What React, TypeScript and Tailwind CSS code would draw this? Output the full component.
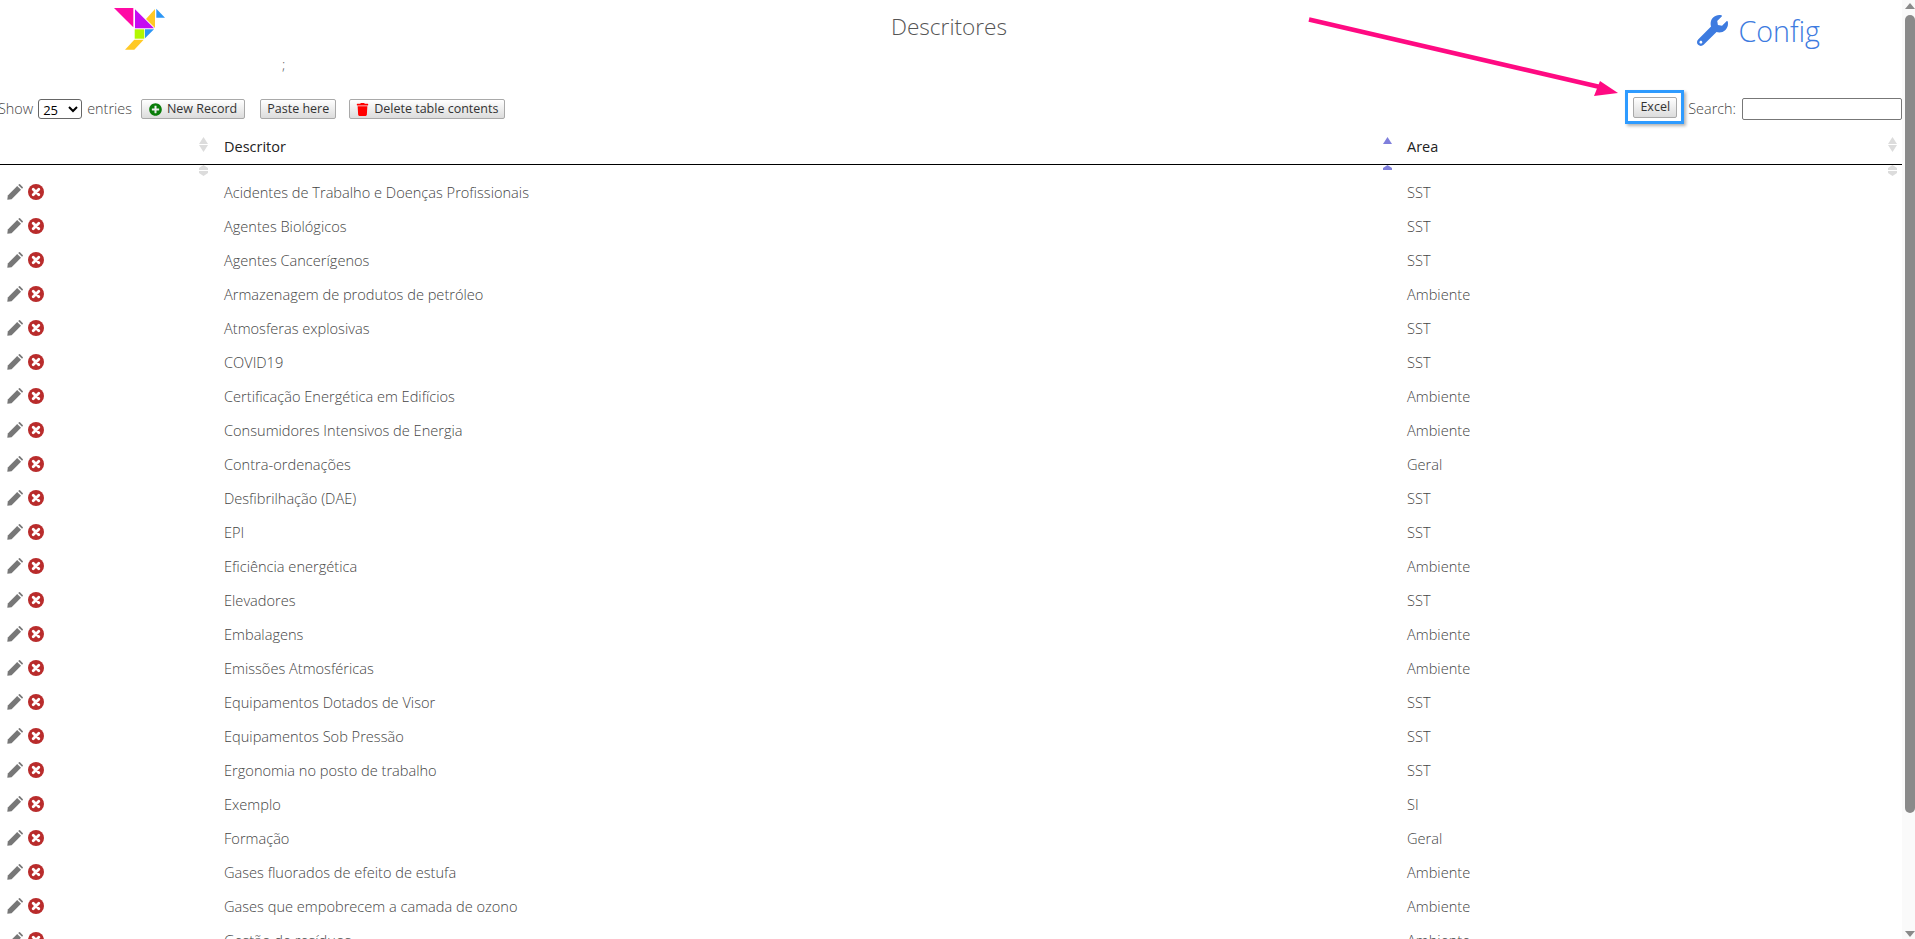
import { FaPlusCircle, FaTrash, FaWrench } from "react-icons/fa";

const rows: [string, string][] = [
  ["Acidentes de Trabalho e Doenças Profissionais", "SST"],
  ["Agentes Biológicos", "SST"],
  ["Agentes Cancerígenos", "SST"],
  ["Armazenagem de produtos de petróleo", "Ambiente"],
  ["Atmosferas explosivas", "SST"],
  ["COVID19", "SST"],
  ["Certificação Energética em Edifícios", "Ambiente"],
  ["Consumidores Intensivos de Energia", "Ambiente"],
  ["Contra-ordenações", "Geral"],
  ["Desfibrilhação (DAE)", "SST"],
  ["EPI", "SST"],
  ["Eficiência energética", "Ambiente"],
  ["Elevadores", "SST"],
  ["Embalagens", "Ambiente"],
  ["Emissões Atmosféricas", "Ambiente"],
  ["Equipamentos Dotados de Visor", "SST"],
  ["Equipamentos Sob Pressão", "SST"],
  ["Ergonomia no posto de trabalho", "SST"],
  ["Exemplo", "SI"],
  ["Formação", "Geral"],
  ["Gases fluorados de efeito de estufa", "Ambiente"],
  ["Gases que empobrecem a camada de ozono", "Ambiente"],
  ["Gestão de resíduos", "Ambiente"],
];

const btn =
  "h-[20px] px-[6px] flex items-center gap-[5px] rounded-[2px] border border-[#a9a9a9] bg-gradient-to-b from-white to-[#dcdcdc] text-[12.5px] font-normal text-[#333]";

function Logo() {
  return (
    <svg width="56" height="46" viewBox="112 6 56 46" className="block">
      <polygon points="114,8 133.3,8 133.3,27.3" fill="#ff0aa5" />
      <polygon points="135,9.3 154,28.3 135,28.3" fill="#c50cf2" />
      <polygon points="155,9 155,28 146,19" fill="#ffc926" />
      <polygon points="156.3,8.7 165,17.7 156.3,17.7" fill="#2b96f5" />
      <rect x="134.7" y="29.3" width="9.6" height="9.4" fill="#b2f700" />
      <polygon points="145,29.3 154,29.3 145,38.3" fill="#2b96f5" />
      <polygon points="134.3,39.7 143.7,39.7 134.3,49.7 125,49.7" fill="#ffc926" />
    </svg>
  );
}

function SortIcon({ active }: { active?: boolean }) {
  const color = active ? "#7f7fdc" : "#dcdcdc";
  return (
    <svg width="9" height="15" viewBox="0 0 9 15" className="block">
      <polygon points="4.5,0 9,7 0,7" fill={color} />
      {!active && <polygon points="0,8 9,8 4.5,15" fill={color} />}
    </svg>
  );
}

// the same icon squashed into the spacer row under the header
function SortIconClipped({ active }: { active?: boolean }) {
  const color = active ? "#7f7fdc" : "#dcdcdc";
  return (
    <svg width="9" height="11" viewBox="0 0 9 11" className="block">
      <polygon points="4.5,0 9,3 9,5 0,5 0,3" fill={color} />
      {!active && <polygon points="0,6 9,6 9,8 4.5,11 0,8" fill={color} />}
    </svg>
  );
}

function PencilIcon() {
  return (
    <svg width="16" height="16" viewBox="0 0 16 16" className="block shrink-0">
      <path d="M0.3 15.7 L0.8 11.4 L10.2 2 L14 5.8 L4.6 15.2 Z" fill="#777" />
      <path d="M11.2 1 L12.1 0.2 Q12.5 -0.1 13 0.3 L15.7 3 Q16.1 3.5 15.8 3.9 L15 4.8 Z" fill="#777" />
    </svg>
  );
}

function RemoveIcon() {
  return (
    <svg width="16" height="16" viewBox="0 0 16 16" className="block shrink-0">
      <circle cx="8" cy="8" r="8" fill="#b92c2c" />
      <path d="M5.2 5.2 L10.8 10.8 M10.8 5.2 L5.2 10.8" stroke="#fff" strokeWidth="2.8" strokeLinecap="round" />
    </svg>
  );
}

function Arrow() {
  return (
    <svg width="320" height="90" viewBox="1305 15 320 90" className="absolute left-[1305px] top-[15px] pointer-events-none">
      <line x1="1309" y1="19.5" x2="1600" y2="87" stroke="#ff0a82" strokeWidth="4.5" />
      <polygon points="1618,93 1594,96 1600,81" fill="#ff0a82" />
    </svg>
  );
}

function Scrollbar() {
  return (
    <div className="w-[13px] shrink-0 bg-[#fafafa] flex flex-col items-end">
      <svg width="10" height="6" viewBox="0 0 10 6" className="mt-[3px] shrink-0">
        <polygon points="5,0 10,6 0,6" fill="#8a8a8a" />
      </svg>
      <div className="mt-[6px] h-[798px] w-[10px] rounded-[5px] bg-[#8a8a8a]" />
      <svg width="10" height="6" viewBox="0 0 10 6" className="mt-auto mb-[2px] shrink-0">
        <polygon points="0,0 10,0 5,6" fill="#8a8a8a" />
      </svg>
    </div>
  );
}

export default function App() {
  return (
    <div className="relative flex h-screen overflow-hidden bg-white font-['Open_Sans',sans-serif] font-light text-[#444]">
      <div className="flex-1 min-w-0">
        <header className="grid grid-cols-3 h-[97px]">
          <div className="pl-[112px] pt-[6px]">
            <Logo />
            <div className="ml-[170px] mt-[4px] text-[14px] leading-[18px] text-[#555]">;</div>
          </div>
          <h1 className="pt-[10px] pr-[4px] text-center text-[22.6px] leading-[34px] font-light text-[#555]">Descritores</h1>
          <div className="flex justify-end gap-[10px] pr-[82px] pt-[12px] text-[#3d7be0]">
            <FaWrench className="mt-[3px] text-[31px]" />
            <span className="text-[28.7px] leading-[38px]">Config</span>
          </div>
        </header>

        <div className="flex items-center h-[24px] text-[14.4px] text-[#444]">
          <span className="-ml-[2px]">Show</span>
          <select className="ml-[5px] h-[20px] w-[44px] rounded-[3px] border border-[#666] bg-white text-[13px] font-normal text-black" defaultValue="25">
            <option>25</option>
            <option>50</option>
          </select>
          <span className="ml-[5px]">entries</span>
          <button className={`${btn} ml-[9px] !px-[7px]`}>
            <FaPlusCircle className="text-[13px] text-[#0a7d0a]" />
            New Record
          </button>
          <button className={`${btn} ml-[15px]`}>Paste here</button>
          <button className={`${btn} ml-[13px]`}>
            <FaTrash className="text-[13px] text-[#f00]" />
            Delete table contents
          </button>
          <div className="ml-auto flex items-center">
            <div className="-mt-[4px] flex h-[34px] w-[59px] items-center justify-center border-[3px] border-[#2e9bff] shadow-[2px_2px_3px_rgba(0,0,0,0.3)]">
              <button className={`${btn} ml-[1px] h-[21px]`}>Excel</button>
            </div>
            <span className="ml-[4px]">Search:</span>
            <input className="ml-[6px] h-[22px] w-[160px] rounded-[2px] border border-[#777] bg-white" />
          </div>
        </div>

        <table className="mt-[8px] w-[1902px] table-fixed border-collapse text-[14.6px]">
          <thead>
            <tr className="h-[35px] border-b border-black">
              <th className="relative w-[216px] p-0">
                <span className="absolute right-[8px] top-[8px]"><SortIcon /></span>
              </th>
              <th className="relative w-[1191px] pl-[8px] pt-[2px] text-left text-[14.5px] font-normal text-[#222]">
                Descritor
                <span className="absolute right-[15px] top-[8px]"><SortIcon active /></span>
              </th>
              <th className="relative pl-0 pt-[2px] text-left text-[14.5px] font-normal text-[#222]">
                Area
                <span className="absolute right-[5px] top-[8px]"><SortIcon /></span>
              </th>
            </tr>
          </thead>
          <tbody>
            <tr className="h-[11px]">
              <td className="relative p-0">
                <span className="absolute right-[8px] top-0"><SortIconClipped /></span>
              </td>
              <td className="relative p-0">
                <span className="absolute right-[15px] top-0"><SortIconClipped active /></span>
              </td>
              <td className="relative p-0">
                <span className="absolute right-[5px] top-0"><SortIconClipped /></span>
              </td>
            </tr>
            {rows.map(([name, area]) => (
              <tr key={name} className="h-[34px]">
                <td className="p-0">
                  <div className="flex items-center gap-[5px] pl-[7px]">
                    <PencilIcon />
                    <RemoveIcon />
                  </div>
                </td>
                <td className="p-0 pl-[8px] pt-[2px]">{name}</td>
                <td className="p-0 pt-[2px]">{area}</td>
              </tr>
            ))}
          </tbody>
        </table>
      </div>
      <Scrollbar />
      <Arrow />
    </div>
  );
}
